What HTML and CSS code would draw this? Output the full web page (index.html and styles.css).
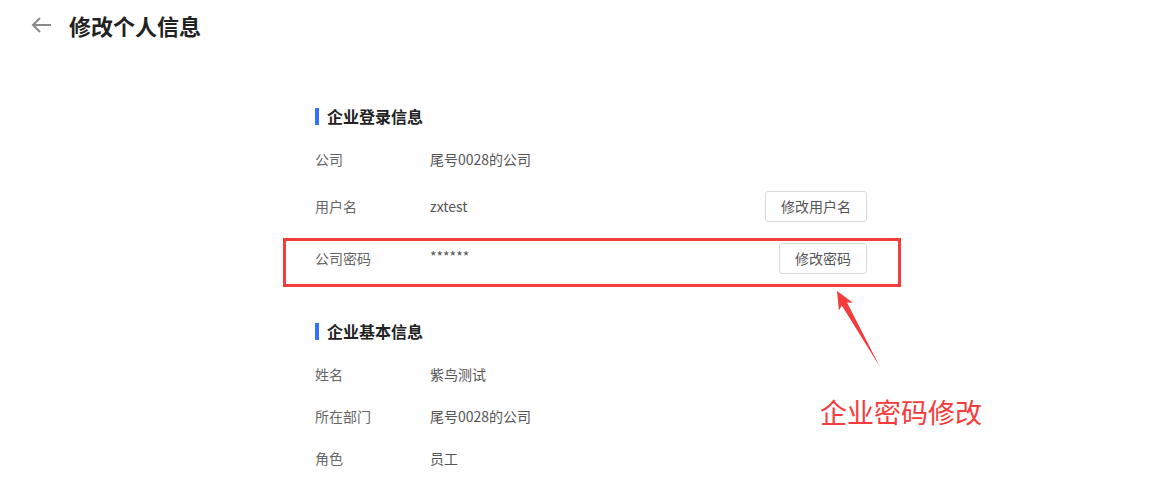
FILE: index.html
```html
<!DOCTYPE html>
<html lang="zh-CN">

<head>
    <meta charset="UTF-8">
    <title>修改个人信息</title>
    <link rel="stylesheet" href="styles.css">
</head>

<body>
    <div class="page">
        <div class="header">
            <svg class="back" width="20" height="16" viewBox="0 0 20 16">
                <path d="M20 8H2M9 1L2 8L9 15" fill="none" stroke="#8a8a8a" stroke-width="2"/>
            </svg>
            <h1>修改个人信息</h1>
        </div>

        <div class="content">
            <!-- 企业登录信息 -->
            <div class="section-title">企业登录信息</div>
            <div class="row">
                <span class="label">公司</span>
                <span class="value">尾号0028的公司</span>
            </div>
            <div class="row tall">
                <span class="label">用户名</span>
                <span class="value">zxtest</span>
                <button class="btn">修改用户名</button>
            </div>
            <div class="row tall marked">
                <span class="label">公司密码</span>
                <span class="value stars">******</span>
                <button class="btn">修改密码</button>
                <div class="mark-box"></div>
            </div>

            <!-- 企业基本信息 -->
            <div class="section-title second">企业基本信息</div>
            <div class="row">
                <span class="label">姓名</span>
                <span class="value">紫鸟测试</span>
            </div>
            <div class="row">
                <span class="label">所在部门</span>
                <span class="value">尾号0028的公司</span>
            </div>
            <div class="row">
                <span class="label">角色</span>
                <span class="value">员工</span>
            </div>
        </div>

        <!-- annotation -->
        <svg class="note-arrow" width="1169" height="492">
            <polygon points="837,291 852.9,302.7 847,302.6 880,367 841.8,305.6 838.9,310.6" fill="#f53b3b"/>
        </svg>
        <div class="note-text">企业密码修改</div>
    </div>
</body>

</html>
```

FILE: styles.css
```css
/* styles.css */
body {
    margin: 0;
    padding: 0;
    background-color: #fff;
    font-family: "Noto Sans CJK SC", "Liberation Sans", sans-serif;
}

.page {
    position: relative;
    width: 1169px;
    height: 492px;
    overflow: hidden;
}

.header {
    display: flex;
    align-items: center;
    height: 49px;
    padding-left: 31px;
}

.back {
    display: block;
    margin-right: 18px;
}

.header h1 {
    margin: 0;
    font-size: 22px;
    font-weight: bold;
    color: #222;
    line-height: 1;
}

.content {
    width: 552px;
    margin-left: 315px;
    padding-top: 55px;
}

.section-title {
    display: flex;
    align-items: center;
    height: 24px;
    margin-bottom: 10px;
    font-size: 16px;
    font-weight: bold;
    color: #222;
}

.section-title::before {
    content: "";
    width: 4px;
    height: 17px;
    margin-right: 8px;
    background-color: #3370ff;
}

.section-title.second {
    margin-top: 35px;
}

.row {
    display: flex;
    align-items: center;
    height: 42px;
    font-size: 14px;
}

.row.tall {
    height: 52px;
}

.label {
    width: 115px;
    color: #666;
}

.value {
    flex: 1;
    color: #555;
}

.stars {
    position: relative;
    top: -2px;
}

.btn {
    height: 31px;
    padding: 0 15px;
    background-color: #fff;
    border: 1px solid #d9d9d9;
    border-radius: 3px;
    font-family: inherit;
    font-size: 14px;
    color: #555;
    cursor: pointer;
}

.marked {
    position: relative;
}

.mark-box {
    position: absolute;
    left: -32px;
    right: -34px;
    top: 6px;
    bottom: -3px;
    border: 3px solid #f53b3b;
}

.note-arrow {
    position: absolute;
    left: 0;
    top: 0;
    pointer-events: none;
}

.note-text {
    position: absolute;
    left: 820px;
    top: 396px;
    font-size: 27px;
    color: #f53b3b;
    line-height: 1.2;
}
```
